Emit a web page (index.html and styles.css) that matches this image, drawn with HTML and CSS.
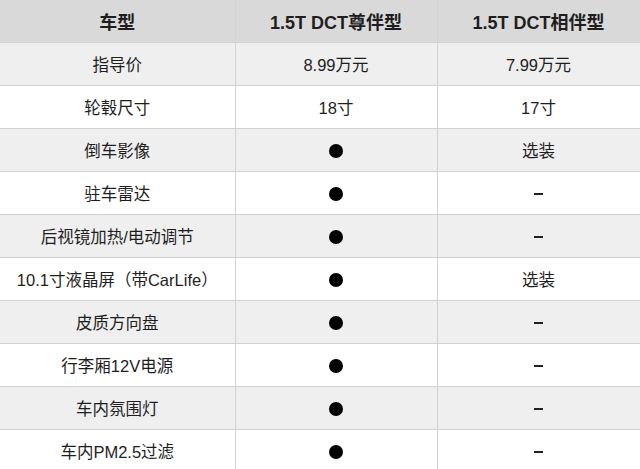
FILE: index.html
```html
<!DOCTYPE html>
<html lang="zh">
<head>
<meta charset="utf-8">
<link rel="stylesheet" href="styles.css">
</head>
<body>
<table class="spec">
  <colgroup><col class="c1"><col class="c2"><col class="c3"></colgroup>
  <thead>
    <tr><th>车型</th><th>1.5T DCT尊伴型</th><th>1.5T DCT相伴型</th></tr>
  </thead>
  <tbody>
    <tr><td>指导价</td><td>8.99万元</td><td>7.99万元</td></tr>
    <tr><td>轮毂尺寸</td><td>18寸</td><td>17寸</td></tr>
    <tr><td>倒车影像</td><td><span class="dot"></span></td><td>选装</td></tr>
    <tr><td>驻车雷达</td><td><span class="dot"></span></td><td><span class="dash"></span></td></tr>
    <tr><td>后视镜加热/电动调节</td><td><span class="dot"></span></td><td><span class="dash"></span></td></tr>
    <tr><td>10.1寸液晶屏（带CarLife）</td><td><span class="dot"></span></td><td>选装</td></tr>
    <tr><td>皮质方向盘</td><td><span class="dot"></span></td><td><span class="dash"></span></td></tr>
    <tr><td>行李厢12V电源</td><td><span class="dot"></span></td><td><span class="dash"></span></td></tr>
    <tr><td>车内氛围灯</td><td><span class="dot"></span></td><td><span class="dash"></span></td></tr>
    <tr><td>车内PM2.5过滤</td><td><span class="dot"></span></td><td><span class="dash"></span></td></tr>
  </tbody>
</table>
</body>
</html>
```
FILE: styles.css
```css
html, body {
  margin: 0;
  padding: 0;
  background: #ffffff;
}
.spec {
  width: 640px;
  height: 469px;
  border-collapse: collapse;
  table-layout: fixed;
  font-family: "Liberation Sans", "Noto Sans CJK SC", sans-serif;
  font-size: 16.5px;
  color: #1e1e1e;
}
.c1 { width: 235px; }
.c2 { width: 202px; }
.c3 { width: 203px; }
.spec th, .spec td {
  text-align: center;
  vertical-align: middle;
  padding: 0;
  border-bottom: 1px solid #d2d2d2;
  border-right: 1px solid #d2d2d2;
  height: 42px;
}
.spec th:last-child, .spec td:last-child {
  border-right: 1px solid #e4e4e4;
}
.spec th {
  background: #d9d9d9;
  font-weight: 700;
  font-size: 18px;
}
.spec tbody tr:nth-child(odd) td {
  background: #efefef;
}
.dot {
  display: inline-block;
  width: 14px;
  height: 14px;
  border-radius: 50%;
  background: #000000;
  vertical-align: middle;
}
.dash {
  display: inline-block;
  width: 9px;
  height: 2px;
  background: #222222;
  vertical-align: middle;
}
```
